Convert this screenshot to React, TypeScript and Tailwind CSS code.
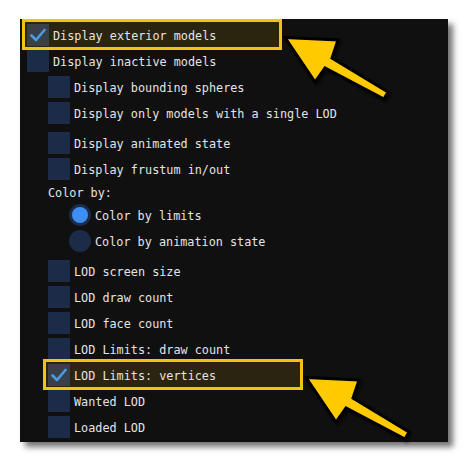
import React from "react";

const mono = { fontFamily: '"DejaVu Sans Mono", "Liberation Mono", monospace' };

function Check() {
  return (
    <svg width="16" height="14" viewBox="0 0 16 14" className="block">
      <path d="M1.5 7.5 L6 12 L14.5 2" fill="none" stroke="#4a9ae6" strokeWidth="2.6" strokeLinecap="round" strokeLinejoin="round" />
    </svg>
  );
}

function Checkbox({ checked }: { checked?: boolean }) {
  return (
    <span
      className={`flex h-[22px] w-[22px] shrink-0 items-center justify-center ${
        checked ? "bg-[#394049]" : "bg-[#1c2c48]"
      }`}
    >
      {checked && <Check />}
    </span>
  );
}

function Row({
  label,
  checked,
  indent,
  highlight,
}: {
  label: string;
  checked?: boolean;
  indent?: boolean;
  highlight?: boolean;
}) {
  return (
    <div className={`relative flex h-[22px] items-center gap-1 ${indent ? "ml-[21px]" : ""}`}>
      {highlight && (
        <span className="absolute left-[-5px] top-[-5px] h-[31px] w-[260px] border-[3px] border-[#f3c30f] bg-[#2b2410]" />
      )}
      <span className="relative">
        <Checkbox checked={checked} />
      </span>
      <span className="relative whitespace-nowrap pt-[3px]">{label}</span>
    </div>
  );
}

function Radio({ label, selected }: { label: string; selected?: boolean }) {
  return (
    <div className="ml-[42px] flex h-[22px] items-center gap-1">
      <span className="flex h-[22px] w-[22px] shrink-0 items-center justify-center rounded-full bg-[#1c2c48]">
        {selected && <span className="h-[16px] w-[16px] rounded-full bg-[#3e8ff2]" />}
      </span>
      <span className="whitespace-nowrap pt-[3px]">{label}</span>
    </div>
  );
}

function Arrow({ dx, dy }: { dx: number; dy: number }) {
  const pts = [
    [0, 0],
    [53, 2.5],
    [47, 20.5],
    [103, 54.5],
    [99, 61.5],
    [40, 30.5],
    [30, 44.5],
  ]
    .map(([x, y]) => `${x + dx},${y + dy}`)
    .join(" ");
  return (
    <polygon
      points={pts}
      fill="#ffcb05"
      stroke="#000"
      strokeWidth="3"
      strokeLinejoin="miter"
      filter="url(#ashadow)"
    />
  );
}

export default function App() {
  return (
    <div className="relative h-[462px] w-[468px] bg-white">
      <div className="absolute left-[20px] top-[19px] h-[423px] w-[428px] bg-[#101010] shadow-[5px_5px_6px_rgba(0,0,0,0.55)]" />
      <div
        className="relative flex flex-col gap-1 pl-[27px] pt-[24px] text-[11.8px] text-[#e4e4e4]"
        style={mono}
      >
        <Row label="Display exterior models" checked highlight />
        <Row label="Display inactive models" />
        <Row label="Display bounding spheres" indent />
        <Row label="Display only models with a single LOD" indent />
        <div className="mt-1 flex flex-col gap-1">
          <Row label="Display animated state" indent />
          <Row label="Display frustum in/out" indent />
          <div className="ml-[21px] flex h-[16px] items-center pt-[3px]">Color by:</div>
          <Radio label="Color by limits" selected />
          <Radio label="Color by animation state" />
        </div>
        <div className="mt-1 flex flex-col gap-1">
          <Row label="LOD screen size" indent />
          <Row label="LOD draw count" indent />
          <Row label="LOD face count" indent />
          <Row label="LOD Limits: draw count" indent />
          <Row label="LOD Limits: vertices" indent checked highlight />
          <Row label="Wanted LOD" indent />
          <Row label="Loaded LOD" indent />
        </div>
      </div>
      <svg className="pointer-events-none absolute left-0 top-0" width="468" height="462">
        <defs>
          <filter id="ashadow" x="-20%" y="-20%" width="140%" height="140%">
            <feDropShadow dx="2" dy="2" stdDeviation="1.5" floodColor="#000" floodOpacity="0.6" />
          </filter>
        </defs>
        <Arrow dx={285} dy={37.5} />
        <Arrow dx={306} dy={377.5} />
      </svg>
    </div>
  );
}
